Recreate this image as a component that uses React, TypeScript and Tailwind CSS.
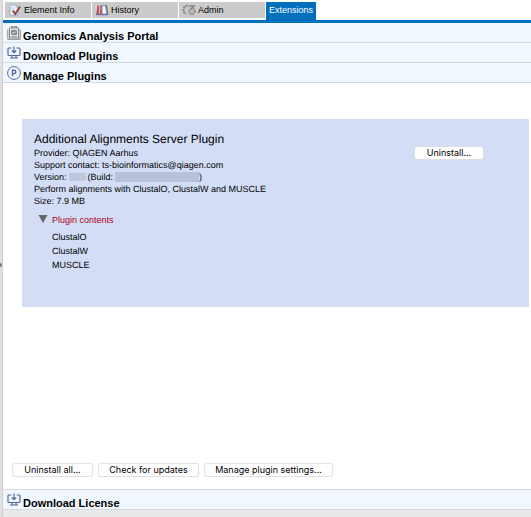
import React from "react";

type IconProps = React.SVGProps<SVGSVGElement>;

interface Tab {
    label: string;
    icon?: React.FC<IconProps>;
    active?: boolean;
}

const ElementIcon = (props: IconProps) => (
    <svg {...props} viewBox="0 0 12 12" fill="none">
        <path d="M1 1h6l2 2v8H1Z" fill="#eef3fb" stroke="#8fa6c9" strokeWidth=".8" />
        <path d="M7 1v2.200h2M2.500 4h3M2.500 6h2" stroke="#9db5d8" strokeWidth=".7" />
        <path d="M3.800 6.500 6.300 10 11 2.500" stroke="#94453f" strokeWidth="2" />
    </svg>
);

const HistoryIcon = (props: IconProps) => (
    <svg {...props} viewBox="0 0 13 12" fill="none">
        <path d="M2 1.500h4.500v8.500H.8Z" fill="#b9525a" />
        <path d="M6.500 1.500h3.500l1.200 8.500H6.500Z" fill="#f5f6fb" stroke="#7381ad" strokeWidth=".8" />
        <path d="M10 1.500h1l1.400 9.200H.6" stroke="#53659b" strokeWidth="1" />
        <path d="M4.300 2 3.900 9.500" stroke="#e3bcc0" strokeWidth="1.200" />
    </svg>
);

const AdminIcon = (props: IconProps) => (
    <svg {...props} viewBox="0 0 14 12" fill="none" stroke="#858585">
        <path d="M5.500 1.500A4.500 4.500 0 0 0 4 10" strokeWidth="2.200" strokeDasharray="1.900 .8" />
        <path d="M6.500 2h5.500L8 6" strokeWidth="1.500" />
        <circle cx="10" cy="7.500" r="2.700" fill="#eee" strokeWidth="2" strokeDasharray="1.600 .6" />
        <circle cx="10" cy="7.500" r="1" fill="#fff" strokeWidth=".8" />
    </svg>
);

const PortalIcon = (props: IconProps) => (
    <svg {...props} viewBox="0 0 14 14" fill="none" stroke="#858585">
        <path d="M4.500 2V.7h5V2M2.500 2h9v10h-9Z" fill="#f1f1f1" strokeWidth="1.100" />
        <path d="M.8 3.500v9.800h12.400V3.500" strokeWidth="1" />
        <path d="M4.500 4.300h5v4.400h-5Z" fill="#8a8a8a" strokeWidth="1" />
        <path d="m5 8 1.500-2 1 1L9 5.500" stroke="#eee" strokeWidth=".8" />
        <path d="M4 10.700h6" strokeWidth=".8" />
    </svg>
);

const DownloadIcon = (props: IconProps) => (
    <svg {...props} viewBox="0 0 14 14" fill="none" stroke="#52699f">
        <path d="M4.500 2H2a1 1 0 0 0-1 1v5.500a1 1 0 0 0 1 1h10a1 1 0 0 0 1-1V3a1 1 0 0 0-1-1H9.500" strokeWidth="1.200" />
        <path d="M7 .5v6M4.800 4.500 7 6.700l2.200-2.200M5 9.500v2.300M9 9.500v2.300M3 12h8" strokeWidth="1.200" />
    </svg>
);

const PluginIcon = (props: IconProps) => (
    <svg {...props} viewBox="0 0 14 14" fill="none" stroke="#52699f">
        <circle cx="7" cy="7" r="6.400" strokeWidth="1" />
        <path d="M5.500 10V4.300h1.700a1.600 1.600 0 0 1 0 3.300H5.500" strokeWidth="1.400" />
    </svg>
);

const tabs: Tab[] = [
    { label: "Element Info", icon: ElementIcon },
    { label: "History", icon: HistoryIcon },
    { label: "Admin", icon: AdminIcon },
    { label: "Extensions", active: true },
];

const contents = ["ClustalO", "ClustalW", "MUSCLE"];

const TabButton: React.FC<{ tab: Tab }> = ({ tab }) => {
    const Icon = tab.icon;
    if (tab.active) {
        return (
            <button role="tab" aria-selected="true" className="flex h-[18px] items-start bg-[#0070bd] px-[3px] text-[9px] leading-4 text-white">
                {tab.label}
            </button>
        );
    }
    return (
        <button role="tab" aria-selected="false" className="flex h-4 w-[86px] items-center gap-[2px] bg-[#cbcbcb] pl-[3px] text-[9px] leading-4">
            {Icon && <Icon className="h-3 w-[14px] shrink-0" aria-hidden="true" />}
            {tab.label}
        </button>
    );
};

const SectionHeader: React.FC<{ title: string; icon: React.FC<IconProps> }> = ({ title, icon: Icon }) => (
    <h2 className="border-b border-[#d6d9de] bg-[#f0f7ff]">
        <button className="flex h-[19px] w-full items-start gap-[2px] pl-1 text-left text-[11px] leading-[26px] font-bold">
            <Icon className="mt-[3px] h-[14px] w-[14px] shrink-0" aria-hidden="true" />
            {title}
        </button>
    </h2>
);

const PushButton: React.FC<{ children: React.ReactNode; className?: string }> = ({ children, className = "" }) => (
    <button className={`h-3 rounded-[2px] bg-white text-center font-['Inter',sans-serif] text-[9px] leading-3 shadow-[0_0_1px_1px_#dedede] ${className}`}>
        {children}
    </button>
);

function App() {
    return (
        <div className="flex min-h-screen bg-[#e9e9e9] font-['Liberation_Sans',Arial,sans-serif] text-black [text-rendering:geometricPrecision]">
            {/* Splitter handle */}
            <div className="flex w-[3px] shrink-0 items-center overflow-hidden border-r border-[#cfcfcf] bg-[#e0e0e0]">
                <span className="mt-3 h-1 w-[2px] rounded-r-full bg-[#777]" />
            </div>

            <div className="flex min-w-0 flex-1 flex-col bg-white">
                <div role="tablist" className="flex items-start gap-px border-b-[3px] border-[#0070bd] pt-[2px] pl-[2px]">
                    {tabs.map((tab) => (
                        <TabButton key={tab.label} tab={tab} />
                    ))}
                </div>

                <SectionHeader title="Genomics Analysis Portal" icon={PortalIcon} />
                <SectionHeader title="Download Plugins" icon={DownloadIcon} />
                <SectionHeader title="Manage Plugins" icon={PluginIcon} />

                <main className="flex flex-1 flex-col justify-between pt-9 pb-[13px]">
                    <section className="mr-[2px] ml-[19px] flex min-h-[188px] items-start justify-between bg-[#d3ddf6] pt-3 pr-[46px] pl-3">
                        <div className="text-[9px] leading-3">
                            <h3 className="text-[12px] leading-4">Additional Alignments Server Plugin</h3>
                            <p>Provider: QIAGEN Aarhus</p>
                            <p>Support contact: ts-bioinformatics@qiagen.com</p>
                            <p className="flex items-center">
                                Version:
                                <span className="mx-[2px] h-2 w-[17px] bg-[#bec7dc]" />
                                (Build:
                                <span className="ml-[2px] h-[10px] w-[84px] bg-[#b7c1d9]" />)
                            </p>
                            <p>Perform alignments with ClustalO, ClustalW and MUSCLE</p>
                            <p>Size: 7.9 MB</p>

                            <button className="mt-[7px] ml-1 flex items-center gap-1 text-[#b00020]" aria-expanded="true">
                                <svg className="h-[10px] w-[10px]" viewBox="0 0 10 10" aria-hidden="true">
                                    <path d="M.5 0h9L5 8Z" fill="#666" />
                                </svg>
                                Plugin contents
                            </button>
                            <ul className="mt-1 ml-[18px] leading-[14px]">
                                {contents.map((item) => (
                                    <li key={item}>{item}</li>
                                ))}
                            </ul>
                        </div>
                        <PushButton className="mt-4 w-[68px]">Uninstall...</PushButton>
                    </section>

                    <div className="flex gap-[7px] pl-[10px]">
                        <PushButton className="w-[79px]">Uninstall all...</PushButton>
                        <PushButton className="w-[99px]">Check for updates</PushButton>
                        <PushButton className="w-[127px]">Manage plugin settings...</PushButton>
                    </div>
                </main>

                <div className="border-t border-[#d6d9de]">
                    <SectionHeader title="Download License" icon={DownloadIcon} />
                </div>
                <div className="h-[7px] bg-[#e9e9e9]" />
            </div>
        </div>
    );
}

export default App;
